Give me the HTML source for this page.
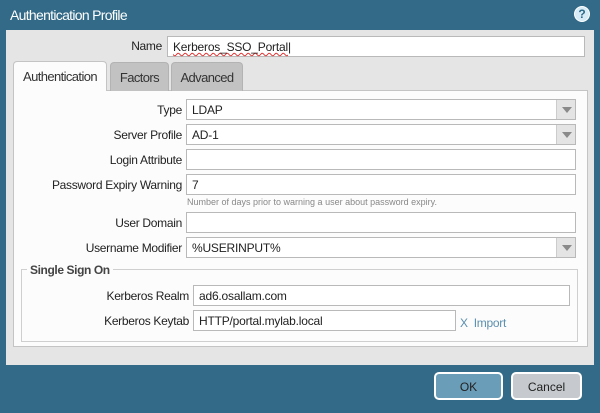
<!DOCTYPE html><html><head><style>
*{box-sizing:border-box;margin:0;padding:0}
body{width:600px;height:413px;background:#336a87;font-family:"Liberation Sans",sans-serif;position:relative;overflow:hidden;font-size:12px;color:#222}
.a{position:absolute}
.t{color:#fff;font-size:14px;left:10px;top:7px;letter-spacing:-0.7px}
.panel{left:6px;top:30px;width:588px;height:335px;background:#e5e5e5}
.inner{left:13px;top:90px;width:575px;height:257px;background:#fcfcfc;border:1px solid #c4c4c4}
.in{background:#fff;border:1px solid #b9b9b9;height:21px;padding:3px 5px;font-size:12px;white-space:nowrap;letter-spacing:-0.2px}
.lbl{text-align:right;font-size:12px;width:170px;white-space:nowrap;letter-spacing:-0.3px}
.dd{position:absolute;right:0;top:0;width:19px;height:19px;background:#e4e4e4;border-left:1px solid #ccc}
.dd:after{content:"";position:absolute;left:5px;top:7px;border-left:5px solid transparent;border-right:5px solid transparent;border-top:6px solid #8a8a8a}
.tab{top:62px;height:29px;background:#c2c2c2;border:1px solid #b3b3b3;border-bottom:none;border-radius:4px 4px 0 0;font-size:13px;letter-spacing:-0.6px;text-align:center;padding-top:7px;color:#333}
.btn{top:372px;height:28px;border:2px solid #fff;border-radius:5px;font-size:12px;text-align:center;padding-top:6px;color:#222}
</style></head><body>
<div class="a t">Authentication Profile</div>
<div class="a" style="left:574px;top:6px;width:16px;height:16px;border-radius:50%;background:#d7ecf7;border:1px solid #fff;color:#2f6a8a;font-weight:bold;font-size:12px;text-align:center;line-height:14px">?</div>
<div class="a panel"></div>
<div class="a lbl" style="left:-8px;top:39px">Name</div>
<div class="a in" style="left:167px;top:36px;width:418px;height:21px"><span style="text-decoration:underline wavy #d33;text-decoration-thickness:1px">Kerberos_SSO_Portal</span>|</div>
<div class="a inner"></div>
<div class="a tab" style="left:13px;width:94px;background:#fcfcfc;border-color:#c4c4c4;height:30px;z-index:2;top:61px">Authentication</div>
<div class="a tab" style="left:110px;width:59px">Factors</div>
<div class="a tab" style="left:171px;width:72px">Advanced</div>

<div class="a lbl" style="left:12px;top:103px">Type</div>
<div class="a in" style="left:186px;top:99px;width:390px">LDAP<div class="dd"></div></div>
<div class="a lbl" style="left:12px;top:128px">Server Profile</div>
<div class="a in" style="left:186px;top:124px;width:390px">AD-1<div class="dd"></div></div>
<div class="a lbl" style="left:12px;top:153px">Login Attribute</div>
<div class="a in" style="left:186px;top:149px;width:390px"></div>
<div class="a lbl" style="left:12px;top:178px">Password Expiry Warning</div>
<div class="a in" style="left:186px;top:174px;width:390px">7</div>
<div class="a" style="left:187px;top:197px;font-size:9px;color:#888">Number of days prior to warning a user about password expiry.</div>
<div class="a lbl" style="left:12px;top:216px">User Domain</div>
<div class="a in" style="left:186px;top:212px;width:390px"></div>
<div class="a lbl" style="left:12px;top:241px">Username Modifier</div>
<div class="a in" style="left:186px;top:237px;width:390px">%USERINPUT%<div class="dd"></div></div>

<div class="a" style="left:21px;top:269px;width:557px;height:73px;border:1px solid #cfcfcf"></div>
<div class="a" style="left:27px;top:263px;background:#fcfcfc;padding:0 3px;font-weight:bold;font-size:12px;letter-spacing:-0.4px;color:#444">Single Sign On</div>
<div class="a lbl" style="left:19px;top:289px">Kerberos Realm</div>
<div class="a in" style="left:193px;top:285px;width:377px">ad6.osallam.com</div>
<div class="a lbl" style="left:19px;top:314px">Kerberos Keytab</div>
<div class="a in" style="left:193px;top:310px;width:263px">HTTP/portal.mylab.local</div>
<div class="a" style="left:460px;top:316px;color:#5b8fb0;font-size:12px;letter-spacing:-0.3px">X&nbsp;&nbsp;Import</div>

<div class="a btn" style="left:434px;width:69px;background:#6a9db8">OK</div>
<div class="a btn" style="left:511px;width:71px;background:#c6c9cd">Cancel</div>
</body></html>
